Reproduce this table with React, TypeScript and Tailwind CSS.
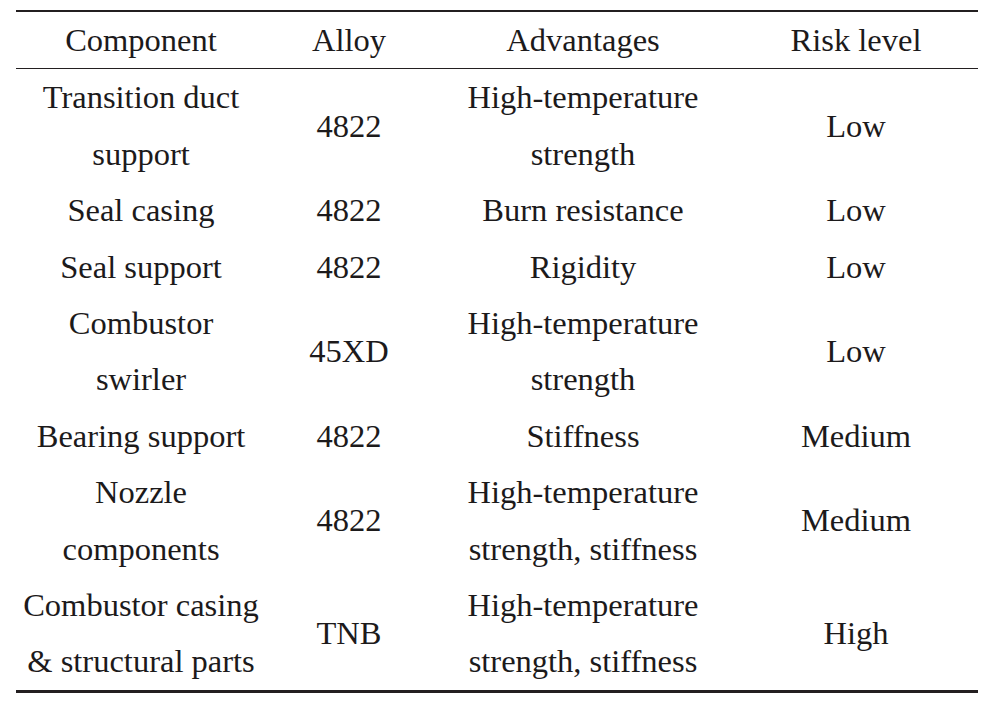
const rows: { component: string[]; alloy: string; advantages: string[]; risk: string }[] = [
  { component: ['Transition duct', 'support'], alloy: '4822', advantages: ['High-temperature', 'strength'], risk: 'Low' },
  { component: ['Seal casing'], alloy: '4822', advantages: ['Burn resistance'], risk: 'Low' },
  { component: ['Seal support'], alloy: '4822', advantages: ['Rigidity'], risk: 'Low' },
  { component: ['Combustor', 'swirler'], alloy: '45XD', advantages: ['High-temperature', 'strength'], risk: 'Low' },
  { component: ['Bearing support'], alloy: '4822', advantages: ['Stiffness'], risk: 'Medium' },
  { component: ['Nozzle', 'components'], alloy: '4822', advantages: ['High-temperature', 'strength, stiffness'], risk: 'Medium' },
  { component: ['Combustor casing', '& structural parts'], alloy: 'TNB', advantages: ['High-temperature', 'strength, stiffness'], risk: 'High' },
];

function Lines({ lines }: { lines: string[] }) {
  return (
    <>
      {lines.map((l, i) => (
        <div key={i} className="whitespace-nowrap">
          {l}
        </div>
      ))}
    </>
  );
}

export default function App() {
  return (
    <div className="w-[996px] h-[706px] bg-white pt-[10px] pl-[16px]">
      <table className="w-[962px] table-fixed border-collapse text-[32.5px] leading-[56.4px] text-[#1c1a1b] font-['Liberation_Serif','Times_New_Roman',serif]">
        <colgroup>
          <col className="w-[250px]" />
          <col className="w-[166px]" />
          <col className="w-[302px]" />
          <col className="w-[244px]" />
        </colgroup>
        <thead>
          <tr className="border-t-2 border-b border-[#231f20] h-[56px]">
            <th className="font-normal text-center p-0">Component</th>
            <th className="font-normal text-center p-0">Alloy</th>
            <th className="font-normal text-center p-0">Advantages</th>
            <th className="font-normal text-center p-0">Risk level</th>
          </tr>
        </thead>
        <tbody className="border-b-[3px] border-[#231f20]">
          {rows.map((r, i) => (
            <tr key={i}>
              <td className="text-center align-middle p-0">
                <Lines lines={r.component} />
              </td>
              <td className="text-center align-middle p-0">{r.alloy}</td>
              <td className="text-center align-middle p-0">
                <Lines lines={r.advantages} />
              </td>
              <td className="text-center align-middle p-0">{r.risk}</td>
            </tr>
          ))}
        </tbody>
      </table>
    </div>
  );
}
